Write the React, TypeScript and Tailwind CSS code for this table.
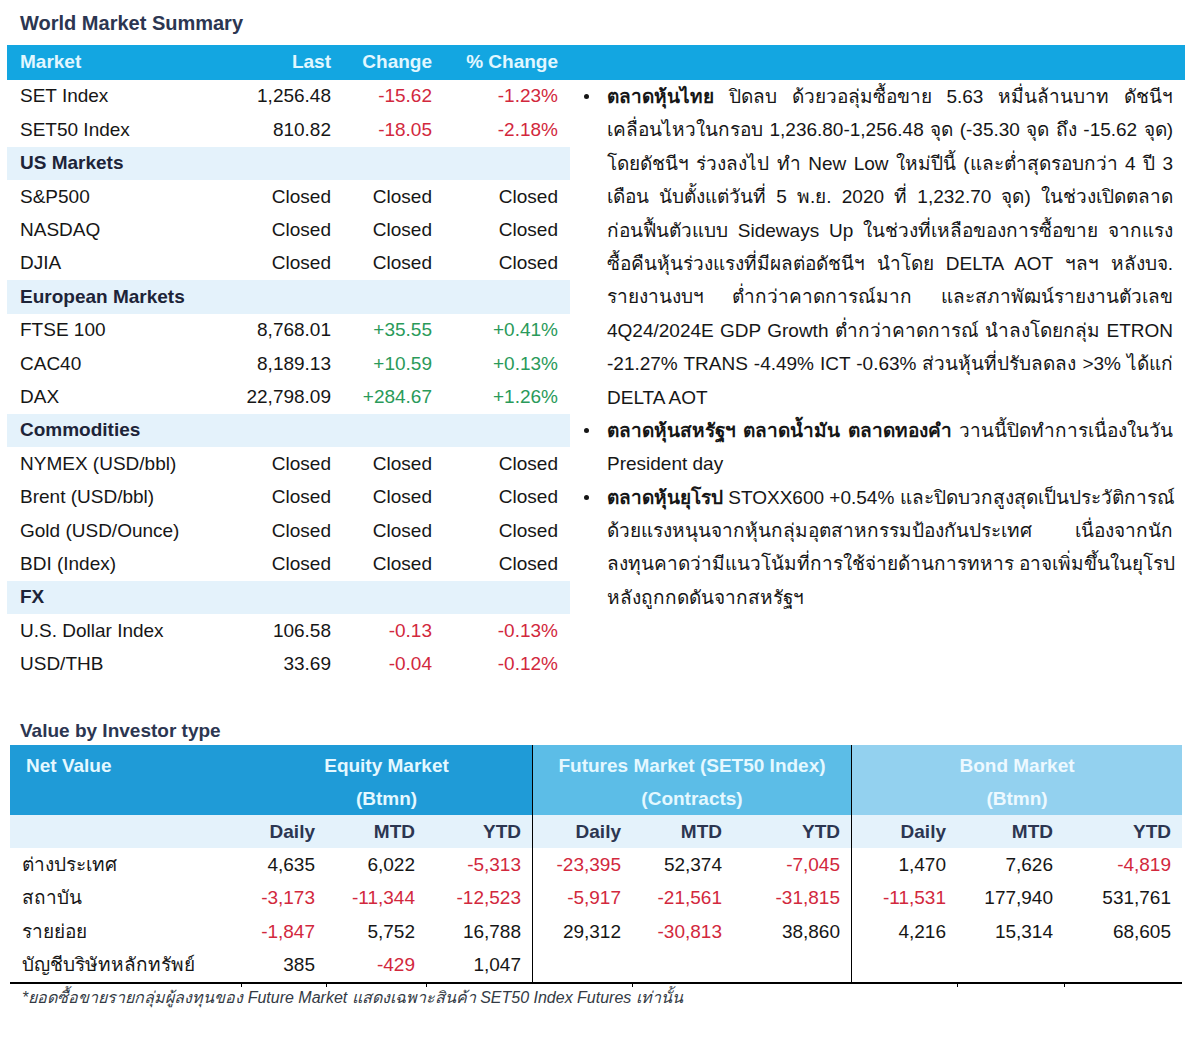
import React from 'react';

type TopRow =
  | { section: string }
  | { label: string; last: string; chg: string; pct: string };

const topRows: TopRow[] = [
  { label: 'SET Index', last: '1,256.48', chg: '-15.62', pct: '-1.23%' },
  { label: 'SET50 Index', last: '810.82', chg: '-18.05', pct: '-2.18%' },
  { section: 'US Markets' },
  { label: 'S&P500', last: 'Closed', chg: 'Closed', pct: 'Closed' },
  { label: 'NASDAQ', last: 'Closed', chg: 'Closed', pct: 'Closed' },
  { label: 'DJIA', last: 'Closed', chg: 'Closed', pct: 'Closed' },
  { section: 'European Markets' },
  { label: 'FTSE 100', last: '8,768.01', chg: '+35.55', pct: '+0.41%' },
  { label: 'CAC40', last: '8,189.13', chg: '+10.59', pct: '+0.13%' },
  { label: 'DAX', last: '22,798.09', chg: '+284.67', pct: '+1.26%' },
  { section: 'Commodities' },
  { label: 'NYMEX (USD/bbl)', last: 'Closed', chg: 'Closed', pct: 'Closed' },
  { label: 'Brent (USD/bbl)', last: 'Closed', chg: 'Closed', pct: 'Closed' },
  { label: 'Gold (USD/Ounce)', last: 'Closed', chg: 'Closed', pct: 'Closed' },
  { label: 'BDI (Index)', last: 'Closed', chg: 'Closed', pct: 'Closed' },
  { section: 'FX' },
  { label: 'U.S. Dollar Index', last: '106.58', chg: '-0.13', pct: '-0.13%' },
  { label: 'USD/THB', last: '33.69', chg: '-0.04', pct: '-0.12%' },
];

// each bullet: bold lead, then the lines as they break in the report
const bullets: { bold: string; lines: string[] }[] = [
  {
    bold: 'ตลาดหุ้นไทย',
    lines: [
      ' ปิดลบ ด้วยวอลุ่มซื้อขาย 5.63 หมื่นล้านบาท ดัชนีฯ',
      'เคลื่อนไหวในกรอบ 1,236.80-1,256.48 จุด (-35.30 จุด ถึง -15.62 จุด)',
      'โดยดัชนีฯ ร่วงลงไป ทำ New Low ใหม่ปีนี้ (และต่ำสุดรอบกว่า 4 ปี 3',
      'เดือน นับตั้งแต่วันที่ 5 พ.ย. 2020 ที่ 1,232.70 จุด) ในช่วงเปิดตลาด',
      'ก่อนฟื้นตัวแบบ Sideways Up ในช่วงที่เหลือของการซื้อขาย จากแรง',
      'ซื้อคืนหุ้นร่วงแรงที่มีผลต่อดัชนีฯ นำโดย DELTA AOT ฯลฯ หลังบจ.',
      'รายงานงบฯ ต่ำกว่าคาดการณ์มาก และสภาพัฒน์รายงานตัวเลข',
      '4Q24/2024E GDP Growth ต่ำกว่าคาดการณ์ นำลงโดยกลุ่ม ETRON',
      '-21.27% TRANS -4.49% ICT -0.63% ส่วนหุ้นที่ปรับลดลง >3% ได้แก่',
      'DELTA AOT',
    ],
  },
  {
    bold: 'ตลาดหุ้นสหรัฐฯ ตลาดน้ำมัน ตลาดทองคำ',
    lines: [' วานนี้ปิดทำการเนื่องในวัน', 'President day'],
  },
  {
    bold: 'ตลาดหุ้นยุโรป',
    lines: [
      ' STOXX600 +0.54% และปิดบวกสูงสุดเป็นประวัติการณ์',
      'ด้วยแรงหนุนจากหุ้นกลุ่มอุตสาหกรรมป้องกันประเทศ เนื่องจากนัก',
      'ลงทุนคาดว่ามีแนวโน้มที่การใช้จ่ายด้านการทหาร อาจเพิ่มขึ้นในยุโรป',
      'หลังถูกกดดันจากสหรัฐฯ',
    ],
  },
];

const investors: { label: string; vals: string[] }[] = [
  { label: 'ต่างประเทศ', vals: ['4,635', '6,022', '-5,313', '-23,395', '52,374', '-7,045', '1,470', '7,626', '-4,819'] },
  { label: 'สถาบัน', vals: ['-3,173', '-11,344', '-12,523', '-5,917', '-21,561', '-31,815', '-11,531', '177,940', '531,761'] },
  { label: 'รายย่อย', vals: ['-1,847', '5,752', '16,788', '29,312', '-30,813', '38,860', '4,216', '15,314', '68,605'] },
  { label: 'บัญชีบริษัทหลักทรัพย์', vals: ['385', '-429', '1,047', '', '', '', '', '', ''] },
];

const tone = (v: string) =>
  v.startsWith('-') ? 'text-[#d2283d]' : v.startsWith('+') ? 'text-[#2a9a5a]' : 'text-[#161616]';

const App = () => {
  return (
    <div className="w-[1200px] h-[1046px] bg-white font-['Liberation_Sans','Noto_Sans',sans-serif] text-[19px] text-[#161616]">
      <div className="h-[45px] flex items-center pl-[20px] text-[20px] font-bold text-[#2c3651]">
        World Market Summary
      </div>

      <div className="ml-[7px] w-[1178px] h-[35px] bg-[#13a6e1] grid grid-cols-[236px_100px_101px_126px] items-center font-bold text-[#e2f7ff]">
        <div className="pl-[13px]">Market</div>
        <div className="text-right pr-[12px]">Last</div>
        <div className="text-right pr-[12px]">Change</div>
        <div className="text-right pr-[12px]">% Change</div>
      </div>

      <div className="flex">
        <div className="ml-[7px] w-[563px]">
          {topRows.map((r, i) =>
            'section' in r ? (
              <div key={i} className="h-[33.4px] flex items-center pl-[13px] bg-[#e4f2fb] font-semibold text-[#1d2438]">
                {r.section}
              </div>
            ) : (
              <div key={i} className="h-[33.4px] grid grid-cols-[236px_100px_101px_126px] items-center">
                <div className="pl-[13px] whitespace-nowrap">{r.label}</div>
                <div className="text-right pr-[12px]">{r.last}</div>
                <div className={`text-right pr-[12px] ${tone(r.chg)}`}>{r.chg}</div>
                <div className={`text-right pr-[12px] ${tone(r.pct)}`}>{r.pct}</div>
              </div>
            )
          )}
        </div>

        <div className="flex-1 pl-[13px]">
          {bullets.map((b, i) => (
            <div key={i} className="flex">
              <div className="w-[24px] h-[33.4px] flex items-center">
                <span className="w-[5px] h-[5px] rounded-full bg-[#161616] ml-[1px]" />
              </div>
              <div className="w-[566px]">
                {b.lines.map((line, j) => {
                  const last = j === b.lines.length - 1;
                  return (
                    <div
                      key={j}
                      className={`h-[33.4px] leading-[33.4px] whitespace-nowrap ${last ? 'text-left' : 'text-justify [text-align-last:justify]'}`}
                    >
                      {j === 0 && <span className="font-bold">{b.bold}</span>}
                      {line}
                    </div>
                  );
                })}
              </div>
            </div>
          ))}
        </div>
      </div>

      <div className="h-[64px] flex items-end pb-[1px] pl-[20px] leading-[26px] text-[19px] font-bold text-[#2c3651]">
        Value by Investor type
      </div>

      <div className="ml-[10px] w-[1172px]">
        <div className="grid grid-cols-[231px_291px_319px_331px] h-[68px] font-bold text-[#e4f8ff] leading-[33px]">
          <div className="bg-[#1f9bd7] pl-[16px] pt-[4px]">Net Value</div>
          <div className="bg-[#1f9bd7] text-center pt-[4px]">
            <div>Equity Market</div>
            <div>(Btmn)</div>
          </div>
          <div className="bg-[#5cbde7] text-center border-l border-black pt-[4px]">
            <div>Futures Market (SET50 Index)</div>
            <div>(Contracts)</div>
          </div>
          <div className="bg-[#93d1ef] text-center border-l border-black pt-[4px] text-[#edf9ff]">
            <div>Bond Market</div>
            <div>(Btmn)</div>
          </div>
        </div>

        <div className="grid grid-cols-[231px_85px_100px_106px_100px_101px_118px_106px_107px_118px] h-[35px] items-stretch bg-[#e4f2fb] font-semibold text-[#2c3651]">
          <div />
          {['Daily', 'MTD', 'YTD', 'Daily', 'MTD', 'YTD', 'Daily', 'MTD', 'YTD'].map((h, k) => (
            <div
              key={k}
              className={`flex items-center justify-end pr-[11px] pt-[3px] ${k === 3 || k === 6 ? 'border-l border-black' : ''}`}
            >
              {h}
            </div>
          ))}
        </div>

        <div className="border-b-2 border-black">
          {investors.map((r, i) => (
            <div key={i} className="grid grid-cols-[231px_85px_100px_106px_100px_101px_118px_106px_107px_118px] h-[33.5px]">
              <div className="pl-[12px] flex items-center whitespace-nowrap">{r.label}</div>
              {r.vals.map((v, k) => (
                <div
                  key={k}
                  className={`flex items-center justify-end pr-[11px] ${tone(v)} ${k === 3 || k === 6 ? 'border-l border-black' : ''}`}
                >
                  {v}
                </div>
              ))}
            </div>
          ))}
        </div>

        <div className="relative h-0">
          {[231, 316, 416, 622, 947, 1054].map((x) => (
            <span key={x} className="absolute top-0 w-px h-[3px] bg-black" style={{ left: x }} />
          ))}
        </div>
      </div>

      <div className="pl-[22px] pt-[4px] text-[16px] italic leading-[20px] text-[#333a44]">
        *ยอดซื้อขายรายกลุ่มผู้ลงทุนของ Future Market แสดงเฉพาะสินค้า SET50 Index Futures เท่านั้น
      </div>
    </div>
  );
};

export default App;
